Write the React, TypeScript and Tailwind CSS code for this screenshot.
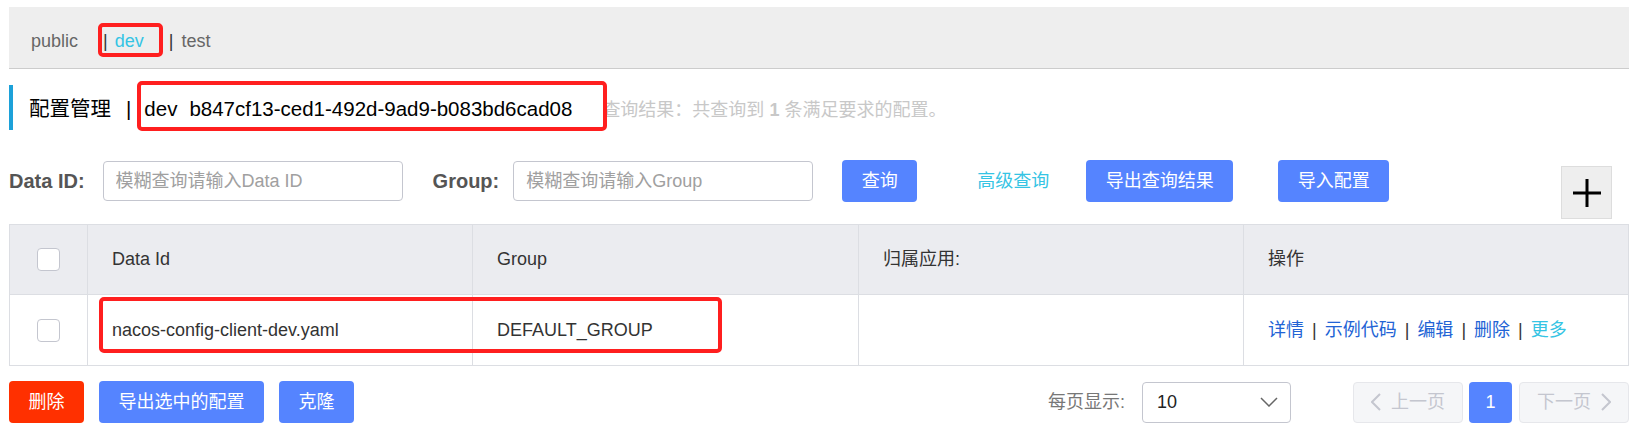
import React from "react";

const blueBtn =
  "h-[42px] rounded-[4px] bg-[#5584ff] text-white text-[18px] flex items-center justify-center";

function Checkbox() {
  return <div className="w-[23px] h-[23px] rounded-[4px] border border-[#c4c6cf] bg-white" />;
}

function Pipe() {
  return <span className="mx-[8px] text-[#333]">|</span>;
}

function PlusIcon() {
  return (
    <svg width="30" height="30" viewBox="0 0 30 30">
      <path d="M15 1 V29 M1 15 H29" stroke="#000" strokeWidth="3" />
    </svg>
  );
}

function Chevron({ dir }: { dir: "left" | "right" | "down" }) {
  if (dir === "down") {
    return (
      <svg width="18" height="10" viewBox="0 0 18 10">
        <path d="M1 1 L9 9 L17 1" fill="none" stroke="#666" strokeWidth="1.5" />
      </svg>
    );
  }
  return (
    <svg width="10" height="18" viewBox="0 0 10 18">
      <path
        d={dir === "left" ? "M9 1 L1 9 L9 17" : "M1 1 L9 9 L1 17"}
        fill="none"
        stroke="#c4c6cf"
        strokeWidth="2"
      />
    </svg>
  );
}

const cols = "grid grid-cols-[77px_385px_386px_385px_1fr]";

export default function App() {
  return (
    <div className="relative w-[1644px] h-[434px] overflow-hidden bg-white pl-[9px] pr-[15px] pt-[7px] text-[18px] text-[#333] font-['Liberation_Sans','Noto_Sans_CJK_SC',sans-serif]">
      {/* namespace tabs */}
      <div className="h-[62px] bg-[#eeeeee] border-b border-[#cccccc] flex items-center pl-[22px] pt-[7px] text-[18px]">
        <span className="text-[#666]">public</span>
        <span className="ml-[25px] text-[#333]">|</span>
        <span className="ml-[7px] text-[#35c4e4]">dev</span>
        <span className="ml-[25px] text-[#333]">|</span>
        <span className="ml-[8px] text-[#666]">test</span>
      </div>

      {/* title */}
      <div className="mt-[16px] h-[45px] flex items-center">
        <div className="w-[4px] h-[45px] bg-[#1ca1d9]" />
        <div className="ml-[16px] mt-[4px] flex items-baseline">
          <span className="text-[20.5px] text-black">配置管理</span>
          <span className="ml-[15px] text-[20.5px] text-black">|</span>
          <span className="ml-[13px] text-[20.5px] text-black">dev</span>
          <span className="ml-[12px] text-[20.5px] text-black">b847cf13-ced1-492d-9ad9-b083bd6cad08</span>
          <span className="ml-[30px] text-[18px] text-[#c8c8c8]">
            查询结果：共查询到 <b className="font-bold">1</b> 条满足要求的配置。
          </span>
        </div>
      </div>

      {/* filters */}
      <div className="mt-[30px] flex items-start">
        <div className="h-[42px] flex items-center text-[20px] font-bold text-[#555]">Data ID:</div>
        <input
          readOnly
          placeholder="模糊查询请输入Data ID"
          className="ml-[18px] mt-[1px] w-[300px] h-[40px] rounded-[4px] border border-[#c4c6cf] px-[12px] text-[18px] outline-none placeholder:text-[#a0a0a0]"
        />
        <div className="ml-[30px] h-[42px] flex items-center text-[20px] font-bold text-[#555]">Group:</div>
        <input
          readOnly
          placeholder="模糊查询请输入Group"
          className="ml-[14px] mt-[1px] w-[300px] h-[40px] rounded-[4px] border border-[#c4c6cf] px-[12px] text-[18px] outline-none placeholder:text-[#a0a0a0]"
        />
        <div className={`${blueBtn} ml-[29px] w-[75px]`}>查询</div>
        <div className="ml-[60px] h-[42px] flex items-center text-[#35c4e4]">高级查询</div>
        <div className={`${blueBtn} ml-[37px] w-[147px]`}>导出查询结果</div>
        <div className={`${blueBtn} ml-[45px] w-[111px]`}>导入配置</div>
        <div className="ml-[172px] mt-[6px] w-[51px] h-[53px] bg-[#eeeeee] border border-[#dddddd] flex items-center justify-center">
          <PlusIcon />
        </div>
      </div>

      {/* table */}
      <div className="mt-[5px] border border-[#dcdee3]">
        <div className={`${cols} h-[69px] bg-[#ebecf0]`}>
          <div className="flex items-center justify-center">
            <Checkbox />
          </div>
          <div className="border-l border-[#dcdee3] flex items-center pl-[24px]">Data Id</div>
          <div className="border-l border-[#dcdee3] flex items-center pl-[24px]">Group</div>
          <div className="border-l border-[#dcdee3] flex items-center pl-[24px]">归属应用:</div>
          <div className="border-l border-[#dcdee3] flex items-center pl-[24px]">操作</div>
        </div>
        <div className={`${cols} h-[71px] border-t border-[#dcdee3]`}>
          <div className="flex items-center justify-center">
            <Checkbox />
          </div>
          <div className="border-l border-[#dcdee3] flex items-center pl-[24px]">nacos-config-client-dev.yaml</div>
          <div className="border-l border-[#dcdee3] flex items-center pl-[24px]">DEFAULT_GROUP</div>
          <div className="border-l border-[#dcdee3]" />
          <div className="border-l border-[#dcdee3] flex items-center pl-[24px]">
            <span className="text-[#2263d5]">详情</span>
            <Pipe />
            <span className="text-[#2263d5]">示例代码</span>
            <Pipe />
            <span className="text-[#2263d5]">编辑</span>
            <Pipe />
            <span className="text-[#2263d5]">删除</span>
            <Pipe />
            <span className="text-[#35c4e4]">更多</span>
          </div>
        </div>
      </div>

      {/* footer */}
      <div className="mt-[15px] flex items-center">
        <div className="h-[42px] w-[75px] rounded-[4px] bg-[#ff3000] text-white flex items-center justify-center">删除</div>
        <div className={`${blueBtn} ml-[15px] w-[165px]`}>导出选中的配置</div>
        <div className={`${blueBtn} ml-[15px] w-[75px]`}>克隆</div>

        <div className="ml-auto flex items-center">
          <span className="text-[#777]">每页显示:</span>
          <div className="ml-[17px] w-[149px] h-[41px] rounded-[4px] border border-[#c4c6cf] flex items-center justify-between pl-[14px] pr-[12px]">
            <span className="text-[#222]">10</span>
            <Chevron dir="down" />
          </div>
          <div className="ml-[62px] w-[110px] h-[41px] rounded-[4px] border border-[#e6e7eb] bg-[#f5f6f8] flex items-center justify-center gap-[10px] text-[#c4c6cf]">
            <Chevron dir="left" />
            <span>上一页</span>
          </div>
          <div className="ml-[6px] w-[43px] h-[41px] rounded-[4px] bg-[#5584ff] text-white flex items-center justify-center">1</div>
          <div className="ml-[7px] w-[110px] h-[41px] rounded-[4px] border border-[#e6e7eb] bg-[#f5f6f8] flex items-center justify-center gap-[10px] text-[#c4c6cf]">
            <span>下一页</span>
            <Chevron dir="right" />
          </div>
        </div>
      </div>

      {/* red annotation boxes */}
      <div className="absolute left-[98px] top-[23px] w-[65px] h-[34px] border-4 border-[#ff1f1f] rounded-[5px]" />
      <div className="absolute left-[137px] top-[81px] w-[470px] h-[50px] border-4 border-[#ff1f1f] rounded-[5px]" />
      <div className="absolute left-[99px] top-[297px] w-[623px] h-[56px] border-4 border-[#ff1f1f] rounded-[5px]" />
    </div>
  );
}
